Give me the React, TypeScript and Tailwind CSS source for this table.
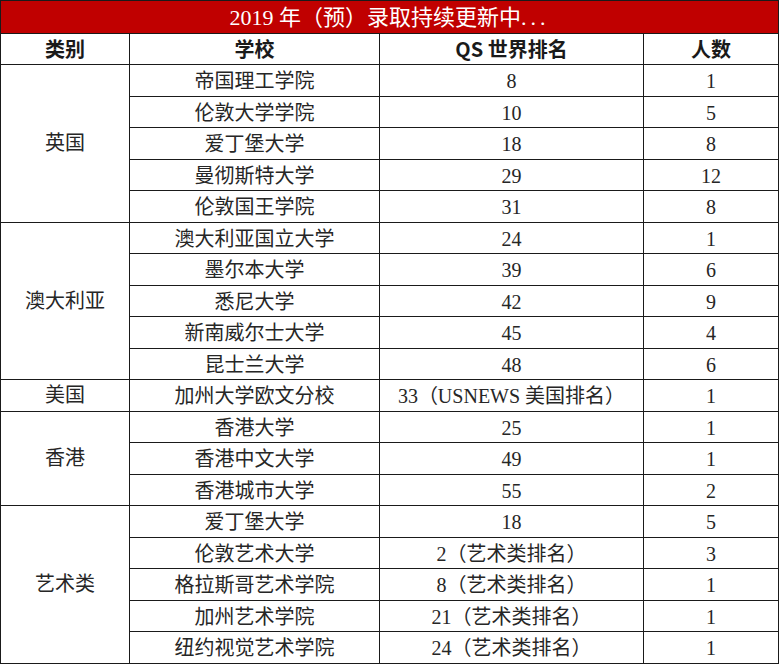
import React from "react";

interface Row {
  school: string;
  rank: string;
  count: string;
}

interface Group {
  name: string;
  rows: Row[];
}

const GROUPS: Group[] = [
  {
    name: "英国",
    rows: [
      { school: "帝国理工学院", rank: "8", count: "1" },
      { school: "伦敦大学学院", rank: "10", count: "5" },
      { school: "爱丁堡大学", rank: "18", count: "8" },
      { school: "曼彻斯特大学", rank: "29", count: "12" },
      { school: "伦敦国王学院", rank: "31", count: "8" },
    ],
  },
  {
    name: "澳大利亚",
    rows: [
      { school: "澳大利亚国立大学", rank: "24", count: "1" },
      { school: "墨尔本大学", rank: "39", count: "6" },
      { school: "悉尼大学", rank: "42", count: "9" },
      { school: "新南威尔士大学", rank: "45", count: "4" },
      { school: "昆士兰大学", rank: "48", count: "6" },
    ],
  },
  {
    name: "美国",
    rows: [{ school: "加州大学欧文分校", rank: "33（USNEWS 美国排名）", count: "1" }],
  },
  {
    name: "香港",
    rows: [
      { school: "香港大学", rank: "25", count: "1" },
      { school: "香港中文大学", rank: "49", count: "1" },
      { school: "香港城市大学", rank: "55", count: "2" },
    ],
  },
  {
    name: "艺术类",
    rows: [
      { school: "爱丁堡大学", rank: "18", count: "5" },
      { school: "伦敦艺术大学", rank: "2（艺术类排名）", count: "3" },
      { school: "格拉斯哥艺术学院", rank: "8（艺术类排名）", count: "1" },
      { school: "加州艺术学院", rank: "21（艺术类排名）", count: "1" },
      { school: "纽约视觉艺术学院", rank: "24（艺术类排名）", count: "1" },
    ],
  },
];

const cell = "border border-[#1a1a1a] p-0 text-center align-middle";

export default function App() {
  return (
    <div className="min-h-screen bg-white">
      <table
        className="w-[778px] table-fixed border-collapse text-[20px] leading-none text-[#262626]"
        style={{ fontFamily: '"Liberation Serif", "Noto Sans CJK SC", serif' }}
      >
        <colgroup>
          <col className="w-[129px]" />
          <col className="w-[250px]" />
          <col className="w-[264px]" />
          <col className="w-[135px]" />
        </colgroup>
        <thead>
          {/* title bar */}
          <tr className="h-[33px]">
            <th colSpan={4} className={`${cell} bg-[#c00000] pt-[2px] text-[22px] font-normal text-white`}>
              2019 年（预）录取持续更新中<span className="tracking-[4px]">...</span>
            </th>
          </tr>
          <tr className="h-[31px]">
            {["类别", "学校", "QS 世界排名", "人数"].map((h) => (
              <th
                key={h}
                className={`${cell} text-[20px] font-bold text-[#1a1a1a]`}
                style={{ fontFamily: '"Noto Sans CJK SC", sans-serif' }}
              >
                {h}
              </th>
            ))}
          </tr>
        </thead>
        <tbody>
          {GROUPS.map((g) =>
            g.rows.map((r, i) => (
              <tr key={g.name + r.school} className="h-[31.5px]">
                {i === 0 && (
                  <td rowSpan={g.rows.length} className={cell}>
                    {g.name}
                  </td>
                )}
                <td className={`${cell} pt-[2px]`}>{r.school}</td>
                <td className={`${cell} pt-[2px]`}>{r.rank}</td>
                <td className={`${cell} pt-[2px]`}>{r.count}</td>
              </tr>
            ))
          )}
        </tbody>
      </table>
    </div>
  );
}
